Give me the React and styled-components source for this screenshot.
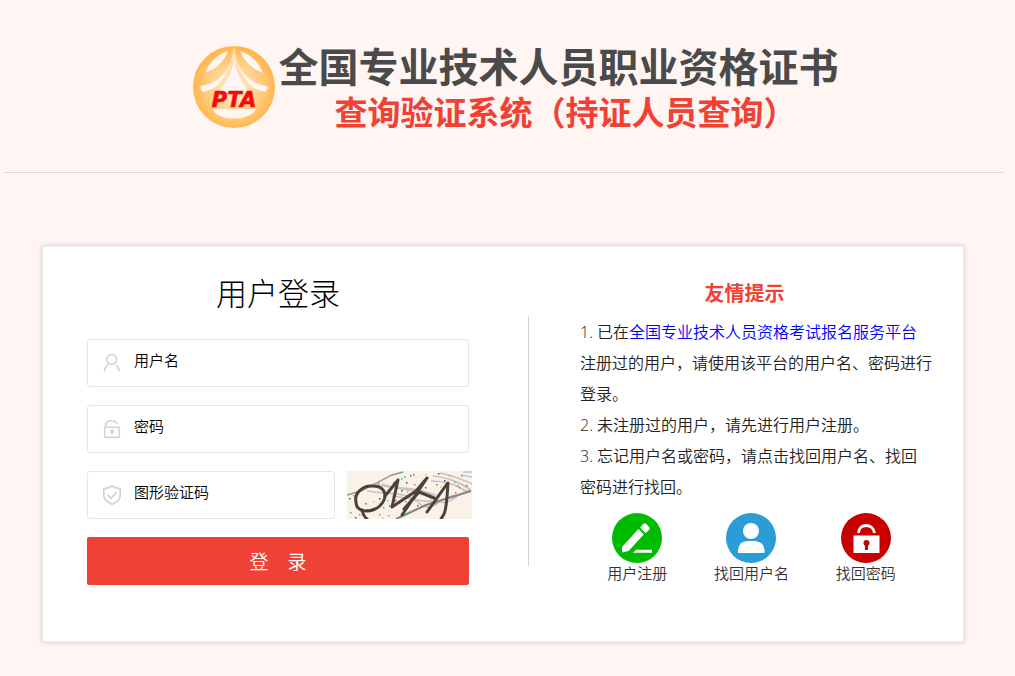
import styled, { createGlobalStyle } from "styled-components"

const GlobalStyle = createGlobalStyle`
    * {
        box-sizing: border-box;
    }

    body {
        margin: 0;
        background-color: #fff5f2;
        color: #222222;
        font-family: "Open Sans", "Noto Sans CJK SC", sans-serif;
        font-weight: 350;
    }

    h1, h2, h3, p, ul {
        margin: 0;
        padding: 0;
    }

    input, button {
        font-family: inherit;
        font-weight: inherit;
    }
`

const Page = styled.div`
    padding: 0 12px 34px 3px;
`

const Header = styled.header`
    display: flex;
    justify-content: center;
    gap: 3px;
    max-width: 1000px;
    height: 173px;
    margin: 0 auto;
    padding: 44px 0 0 24px;
    border-bottom: 1px solid #dcd8d7;
`

const Title = styled.h1`
    color: #4a4a4a;
    font-size: 40px;
    line-height: 46px;
    font-weight: 700;
    text-align: center;
    white-space: nowrap;
`

const SubTitle = styled.span`
    display: block;
    padding-left: 14px;
    color: #f04134;
    font-size: 33px;
    line-height: 46px;
`

const Card = styled.main`
    display: flex;
    max-width: 922px;
    margin: 73px auto 0;
    padding: 24px 24px 56px 44px;
    background-color: #ffffff;
    border: 1px solid #ebebeb;
    box-shadow: 0 0 5px rgba(0, 0, 0, 0.2);
`

const LoginForm = styled.form`
    display: flex;
    flex-direction: column;
    gap: 18px;
    flex: 0 1 382px;
    min-width: 0;
`

const FormTitle = styled.h2`
    height: 50px;
    color: #000000;
    font-size: 31px;
    line-height: 45px;
    font-weight: 300;
    text-align: center;
`

const Row = styled.div`
    display: flex;
    gap: 12px;
`

const Field = styled.label`
    display: flex;
    align-items: center;
    gap: 12px;
    width: ${({ $short }) => ($short ? "248px" : "100%")};
    height: 48px;
    padding: 0 14px;
    border: 1px solid #e6e6e6;
    border-radius: 3px;
    background-color: #ffffff;
`

const FieldIcon = styled.svg`
    flex: none;
    width: 20px;
    height: 20px;
    fill: none;
    stroke: #d2d2d2;
    stroke-width: 1.6;
`

const Input = styled.input`
    flex: 1;
    min-width: 0;
    height: 46px;
    padding: 0 0 6px;
    border: 0;
    outline: 0;
    background: none;
    font-size: 15px;
    color: #000000;

    &::placeholder {
        color: #000000;
        opacity: 1;
    }
`

const CaptchaButton = styled.button`
    flex: none;
    width: 125px;
    height: 48px;
    padding: 0;
    border: 0;
    background-color: #f9f2e7;
    cursor: pointer;

    svg {
        display: block;
    }
`

const SubmitButton = styled.button`
    height: 48px;
    border: 0;
    border-radius: 2px;
    background-color: #ef4136;
    color: #ffffff;
    font-size: 19px;
    cursor: pointer;
`

const Divider = styled.div`
    flex: none;
    width: 1px;
    height: 250px;
    margin: 45px 51px 0 59px;
    background-color: #d4d4d4;
`

const Aside = styled.aside`
    flex: 1;
`

const AsideTitle = styled.h3`
    padding-right: 30px;
    color: #f04134;
    font-size: 20px;
    line-height: 46px;
    text-align: center;
`

const Tip = styled.p`
    font-size: 16px;
    line-height: 31px;
    white-space: nowrap;

    a {
        color: #0000ff;
        text-decoration: none;
    }
`

const Shortcuts = styled.ul`
    display: grid;
    grid-template-columns: repeat(3, 1fr);
    margin: 10px 16px 0 0;
    list-style: none;
`

const Shortcut = styled.a`
    display: flex;
    flex-direction: column;
    align-items: center;
    color: #333333;
    font-size: 15px;
    line-height: 20px;
    text-decoration: none;
`

function Logo() {
    return (
        <svg width="84" height="86" viewBox="0 0 84 86" aria-label="PTA">
            <defs>
                <radialGradient id="gold" cx="50%" cy="52%" r="50%">
                    <stop offset="0" stopColor="#fff3df" />
                    <stop offset="0.5" stopColor="#ffd696" />
                    <stop offset="1" stopColor="#ffb64d" />
                </radialGradient>
            </defs>
            <circle cx="42" cy="43" r="41" fill="url(#gold)" />
            <path d="M34 0L36 7Q30 23 13 29C17 19 24 11 36 7L34 0H50L48 7C60 11 67 19 71 29Q54 23 48 7L50 0Z" fill="#fff5f2" />
            <path d="M42 4C38 29 27 39 9 42C8 44 9 47 11 48C25 44 32 39 37 29L42 15L47 29C52 39 59 44 73 48C75 47 76 44 75 42C57 39 46 29 42 4Z" fill="#fff5f2" />
            <path d="M42 1C40 22 34 32 24 43L31 40C37 34 40 25 42 13C44 25 47 34 53 40L60 43C50 32 44 22 42 1Z" fill="#ffdfae" />
            <path d="M42 15C39 31 34 39 27 48H57C50 39 45 31 42 15Z" fill="#fff5f2" />
            <path d="M20 65H64C57 78 27 78 20 65Z" fill="#fff5f2" />
            <text x="42" y="63" textAnchor="middle" fill="#f50a0a" stroke="#f50a0a" strokeWidth="0.6" fontFamily="DejaVu Sans, sans-serif" fontStyle="italic" fontWeight="700" fontSize="21">PTA</text>
        </svg>
    )
}

function UserIcon() {
    return (
        <FieldIcon viewBox="0 0 20 20">
            <circle cx="9.7" cy="6.5" r="4.9" />
            <path d="M2.5 18.5C2.5 15.2 4.2 12.8 6.6 11.4M14 12.3C16 13.8 17.2 16 17.2 18.5" />
        </FieldIcon>
    )
}

function LockIcon() {
    return (
        <FieldIcon viewBox="0 0 20 20">
            <rect x="2.7" y="8.2" width="14.6" height="10.2" rx="1" />
            <path d="M3.6 8V7C3.6 3.7 6.2 1.8 9.6 1.8C12.2 1.8 14.2 2.8 15.4 5" />
            <circle cx="10" cy="12.2" r="1.2" fill="#d2d2d2" />
            <path d="M10 12V15.6" />
        </FieldIcon>
    )
}

function ShieldIcon() {
    return (
        <FieldIcon viewBox="0 0 20 20">
            <path d="M10 1C7.6 2.6 4.8 3.5 1.8 3.8V10.6C1.8 14.8 5.8 17.6 10 19.2C14.2 17.6 18.2 14.8 18.2 10.6V3.8C15.2 3.5 12.4 2.6 10 1Z" />
            <path d="M5.6 10L9 13.4L14.6 7.4" />
        </FieldIcon>
    )
}

const dotColors = ["#39c45b", "#6957d0", "#e2459c", "#d5d53e", "#4c4c7c", "#56bde5", "#e06a4d"]

const dots = [
    [57, 5], [63, 4], [66, 3], [78, 3], [91, 2], [102, 4], [114, 4], [54, 7], [46, 11], [31, 12],
    [36, 14], [59, 11], [60, 20], [67, 13], [75, 13], [78, 16], [89, 13], [93, 15], [97, 9], [107, 11],
    [110, 14], [112, 16], [119, 14], [108, 21], [116, 20], [2, 27], [6, 24], [12, 43], [3, 41], [18, 32],
    [20, 38], [26, 30], [32, 27], [40, 29], [32, 43], [36, 36], [42, 34], [48, 29], [35, 46], [8, 46],
    [41, 44], [58, 30], [67, 27], [70, 34], [79, 33], [83, 28], [54, 19], [50, 14], [88, 32], [61, 41],
]

function Captcha() {
    return (
        <svg width="125" height="48" viewBox="0 0 125 48">
            <rect width="125" height="48" fill="#f9f2e7" />
            <g fill="none" stroke="#cbbfc4" strokeWidth="1.6">
                <path d="M30 14C49 19 76 14 88 27S107 22 124 19" />
                <path d="M20 20C43 24 59 20 72 32S91 27 108 24" />
                <path d="M35 13C54 20 68 18 89 24M45 25C65 27 69 31 91 31" />
                <path d="M86 5C101 7 111 10 124 19M93 2C106 5 115 8 125 13" />
                <path d="M84 10C98 10 108 13 119 20M116 1H125M114 4L125 6" />
            </g>
            <path d="M0 24L14 20L45 4L56 1" fill="none" stroke="#96928f" strokeWidth="1.4" />
            <path d="M49 48L79 34L124 20" fill="none" stroke="#85868a" strokeWidth="2.2" />
            {dots.map(([x, y], i) => (
                <rect key={i} x={x} y={y} width="1.5" height="1.5" fill={dotColors[i % dotColors.length]} />
            ))}
            <g fill="none" stroke="#4b4138" strokeWidth="3" strokeLinecap="round" strokeLinejoin="round">
                <path d="M9 31C7 23 15 14 26 15C36 15 40 22 37 29C33 38 22 42 14 39C10 37 9 34 9 31Z" />
                <path d="M15 39C16 43 17 46 20 48M38 25L51 9L45 36L69 20L80 7L55 44" />
                <path d="M57 38L72 21L87 27M80 41L100 13" />
                <path d="M101 12C100 25 100 36 97 43L94 48" />
            </g>
        </svg>
    )
}

function RegisterIcon() {
    return (
        <svg width="50" height="50" viewBox="0 0 50 50" fill="#ffffff">
            <circle cx="25" cy="25" r="25" fill="#00bc00" />
            <path d="M26.5 16L31.8 21.5L16.5 38L10 39.5V34Z" />
            <path d="M28 14.5L31.5 10.8Q32.8 9.5 34 10.8L37.3 14.2Q38.4 15.5 37.2 16.8L33.6 20.2Z" />
            <path d="M21 39.8L24 36.8H40V39.8Z" />
        </svg>
    )
}

function FindUserIcon() {
    return (
        <svg width="50" height="50" viewBox="0 0 50 50" fill="#ffffff">
            <circle cx="25" cy="25" r="25" fill="#2a9dd7" />
            <circle cx="25" cy="18" r="8" />
            <path d="M12 40V37Q13 28 22 28H29Q38 29 38.5 37V40Z" />
        </svg>
    )
}

function FindPasswordIcon() {
    return (
        <svg width="50" height="50" viewBox="0 0 50 50" fill="#ffffff">
            <circle cx="25" cy="25" r="25" fill="#c90000" />
            <path d="M17.5 20C18 10 32 10 33.5 20" fill="none" stroke="#ffffff" strokeWidth="2.8" />
            <rect x="12.5" y="22.5" width="26" height="17.5" />
            <circle cx="25.5" cy="30" r="3" fill="#c90000" />
            <rect x="24" y="31" width="3" height="6" fill="#c90000" />
        </svg>
    )
}

const shortcuts = [
    { text: "用户注册", Icon: RegisterIcon },
    { text: "找回用户名", Icon: FindUserIcon },
    { text: "找回密码", Icon: FindPasswordIcon },
]

export default function App() {
    return (
        <>
            <GlobalStyle />
            <Page>
                <Header>
                    <Logo />
                    <Title>
                        全国专业技术人员职业资格证书
                        <SubTitle>查询验证系统（持证人员查询）</SubTitle>
                    </Title>
                </Header>
                <Card>
                    <LoginForm onSubmit={(e) => e.preventDefault()}>
                        <FormTitle>用户登录</FormTitle>
                        <Field>
                            <UserIcon />
                            <Input type="text" placeholder="用户名" aria-label="用户名" />
                        </Field>
                        <Field>
                            <LockIcon />
                            <Input type="password" placeholder="密码" aria-label="密码" />
                        </Field>
                        <Row>
                            <Field $short>
                                <ShieldIcon />
                                <Input type="text" placeholder="图形验证码" aria-label="图形验证码" />
                            </Field>
                            <CaptchaButton type="button" aria-label="图形验证码">
                                <Captcha />
                            </CaptchaButton>
                        </Row>
                        <SubmitButton type="submit">登&emsp;录</SubmitButton>
                    </LoginForm>
                    <Divider />
                    <Aside>
                        <AsideTitle>友情提示</AsideTitle>
                        <Tip>
                            1. 已在<a href="#platform">全国专业技术人员资格考试报名服务平台</a>
                            <br />
                            注册过的用户，请使用该平台的用户名、密码进行
                            <br />
                            登录。
                        </Tip>
                        <Tip>2. 未注册过的用户，请先进行用户注册。</Tip>
                        <Tip>
                            3. 忘记用户名或密码，请点击找回用户名、找回
                            <br />
                            密码进行找回。
                        </Tip>
                        <Shortcuts>
                            {shortcuts.map(({ text, Icon }) => (
                                <li key={text}>
                                    <Shortcut href="#">
                                        <Icon />
                                        {text}
                                    </Shortcut>
                                </li>
                            ))}
                        </Shortcuts>
                    </Aside>
                </Card>
            </Page>
        </>
    )
}
